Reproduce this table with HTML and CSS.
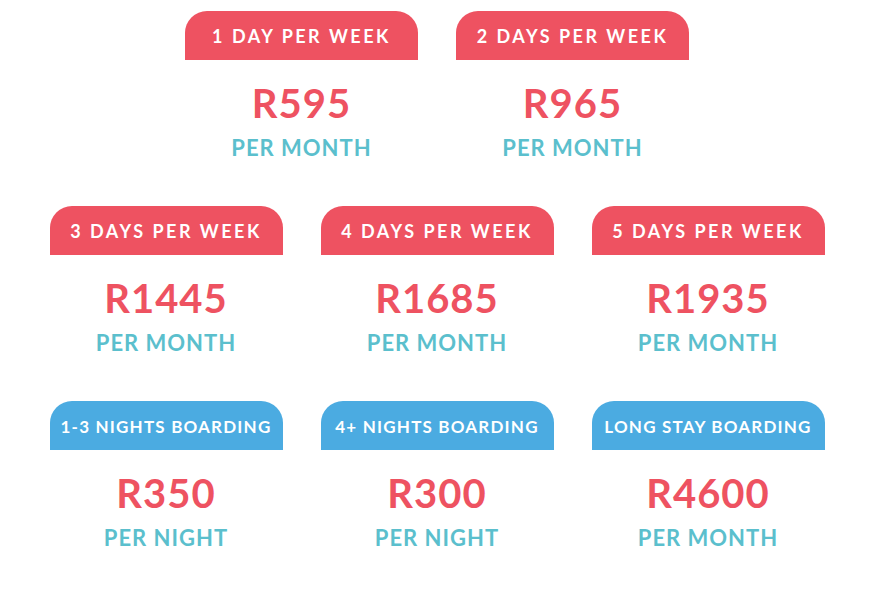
FILE: index.html
```html
<!DOCTYPE html>
<html>
<head>
<meta charset="utf-8">
<link rel="stylesheet" href="styles.css">
</head>
<body>
<div class="page">
  <div class="row">
    <div class="card">
      <div class="tab red">1 DAY PER WEEK</div>
      <div class="price">R595</div>
      <div class="unit">PER MONTH</div>
    </div>
    <div class="card">
      <div class="tab red">2 DAYS PER WEEK</div>
      <div class="price">R965</div>
      <div class="unit">PER MONTH</div>
    </div>
  </div>
  <div class="row">
    <div class="card">
      <div class="tab red">3 DAYS PER WEEK</div>
      <div class="price">R1445</div>
      <div class="unit">PER MONTH</div>
    </div>
    <div class="card">
      <div class="tab red">4 DAYS PER WEEK</div>
      <div class="price">R1685</div>
      <div class="unit">PER MONTH</div>
    </div>
    <div class="card">
      <div class="tab red">5 DAYS PER WEEK</div>
      <div class="price">R1935</div>
      <div class="unit">PER MONTH</div>
    </div>
  </div>
  <div class="row">
    <div class="card">
      <div class="tab blue">1-3 NIGHTS BOARDING</div>
      <div class="price">R350</div>
      <div class="unit">PER NIGHT</div>
    </div>
    <div class="card">
      <div class="tab blue">4+ NIGHTS BOARDING</div>
      <div class="price">R300</div>
      <div class="unit">PER NIGHT</div>
    </div>
    <div class="card">
      <div class="tab blue">LONG STAY BOARDING</div>
      <div class="price">R4600</div>
      <div class="unit">PER MONTH</div>
    </div>
  </div>
</div>
</body>
</html>
```

FILE: styles.css
```css
* { box-sizing: border-box; }
html, body { margin: 0; padding: 0; background: #ffffff; }
body { font-family: "Lato", "Open Sans", sans-serif; }
.page {
  width: 874px;
  padding-top: 11px;
  display: flex;
  flex-direction: column;
  gap: 47px;
}
.row {
  display: flex;
  justify-content: center;
  gap: 38px;
}
.card {
  width: 233px;
  display: flex;
  flex-direction: column;
  align-items: center;
}
.tab {
  width: 100%;
  height: 49px;
  border-radius: 22px 22px 0 0;
  color: #ffffff;
  font-weight: 700;
  white-space: nowrap;
  display: flex;
  align-items: center;
  justify-content: center;
  padding-top: 1px;
}
.red {
  background: #ee5261;
  font-size: 18px;
  letter-spacing: 2.5px;
}
.blue {
  background: #4babe1;
  font-size: 17px;
  letter-spacing: 1.2px;
}
.price {
  margin-top: 23px;
  font-size: 40px;
  line-height: 40px;
  font-weight: 700;
  color: #ee5261;
  letter-spacing: 1px;
}
.unit {
  margin-top: 14px;
  font-size: 22px;
  line-height: 22px;
  font-weight: 700;
  color: #5bbfcd;
  letter-spacing: 1px;
}
```
